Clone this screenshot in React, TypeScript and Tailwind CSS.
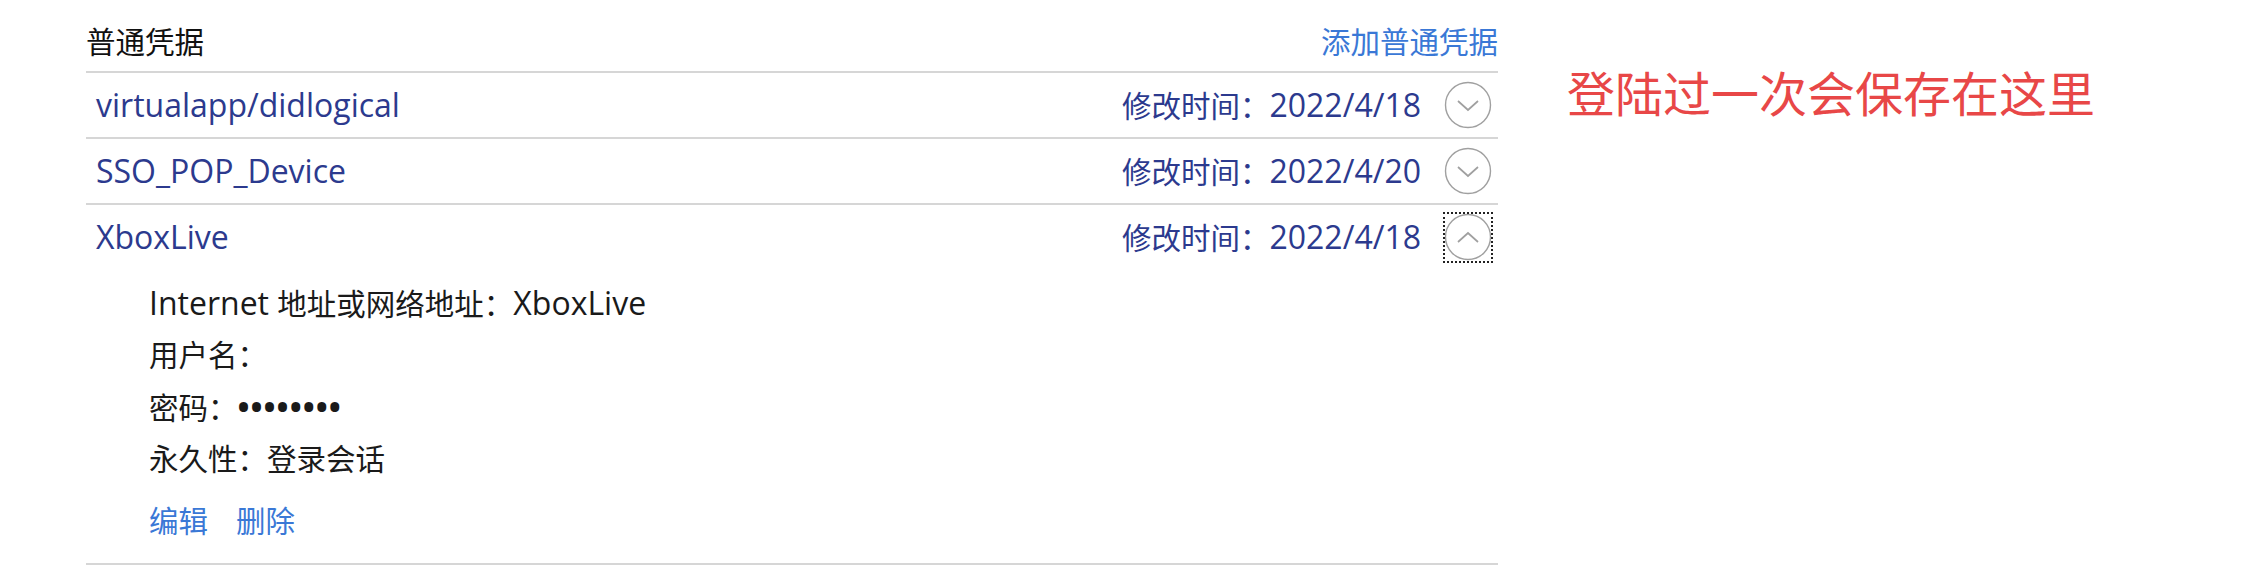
import { useState } from "react";

interface Credencial {
  nome: string;
  data: string;
  endereco?: string;
  usuario?: string;
  senha?: string;
  persistencia?: string;
}

const credenciais: Credencial[] = [
  { nome: "virtualapp/didlogical", data: "2022/4/18" },
  { nome: "SSO_POP_Device", data: "2022/4/20" },
  {
    nome: "XboxLive",
    data: "2022/4/18",
    endereco: "XboxLive",
    usuario: "",
    senha: "••••••••",
    persistencia: "登录会话",
  },
];

// texto latino fica um pouco maior que o CJK, como no Segoe UI + YaHei
function L({ children }: { children: React.ReactNode }) {
  return <span className="text-[32px]">{children}</span>;
}

function Chevron({ open }: { open: boolean }) {
  return (
    <svg width="48" height="48" viewBox="0 0 48 48" fill="none">
      <circle cx="24" cy="24" r="22.5" stroke="#a0a0a0" strokeWidth="1.4" />
      {open ? (
        <polyline points="14,29 24,20 34,29" stroke="#a0a0a0" strokeWidth="1.7" />
      ) : (
        <polyline points="14,20 24,29 34,20" stroke="#a0a0a0" strokeWidth="1.7" />
      )}
    </svg>
  );
}

export default function App() {
  const [aberto, setAberto] = useState<number>(2);

  return (
    <div
      className="w-[2254px] h-[586px] bg-white flex text-[29.5px] leading-none"
      style={{ fontFamily: '"Open Sans", "Noto Sans CJK SC", sans-serif' }}
    >
      <div className="ml-[86px] w-[1412px] flex flex-col">
        {/* cabeçalho */}
        <div className="h-[73px] pt-3 flex items-center justify-between border-b-2 border-[#d6d6d6]">
          <span className="text-[#111]">普通凭据</span>
          <a className="text-[#3a78d6]">添加普通凭据</a>
        </div>

        {credenciais.map((c, i) => (
          <div key={c.nome} className="border-b-2 border-[#d6d6d6]">
            <div className="h-[64px] pl-[10px] pr-[5px] flex items-center justify-between">
              <span className="text-[#2c3a8e]">
                <L>{c.nome}</L>
              </span>
              <div className="flex items-center gap-[22px]">
                <span className="text-[#2c3a8e]">
                  修改时间：<L>{c.data}</L>
                </span>
                <button
                  onClick={() => setAberto(aberto === i ? -1 : i)}
                  className={
                    aberto === i
                      ? "w-[50px] h-[51px] flex items-center justify-center outline-2 outline-dotted outline-[#222] -outline-offset-2"
                      : "w-[50px] h-[51px] flex items-center justify-center"
                  }
                >
                  <Chevron open={aberto === i} />
                </button>
              </div>
            </div>

            {aberto === i && c.endereco !== undefined && (
              <div className="pl-[63px] pt-[8px] pb-[16px] text-[#1a1a1a]">
                <div className="h-[52px] flex items-center">
                  <span>
                    <L>Internet </L>地址或网络地址：<L>{c.endereco}</L>
                  </span>
                </div>
                <div className="h-[52px] flex items-center">
                  <span>用户名：{c.usuario}</span>
                </div>
                <div className="h-[52px] flex items-center">
                  <span>
                    密码：<span className="text-[32px] font-bold tracking-[1px]">{c.senha}</span>
                  </span>
                </div>
                <div className="h-[52px] flex items-center">
                  <span>永久性：{c.persistencia}</span>
                </div>
                <div className="mt-[10px] h-[52px] flex items-center gap-[28px] text-[#3a78d6]">
                  <a>编辑</a>
                  <a>删除</a>
                </div>
              </div>
            )}
          </div>
        ))}
      </div>

      <div
        className="ml-[69px] mt-[67px] text-[48px] leading-[48px] text-[#e84747] h-fit"
        style={{ fontFamily: '"Noto Sans CJK SC", sans-serif' }}
      >
        登陆过一次会保存在这里
      </div>
    </div>
  );
}
